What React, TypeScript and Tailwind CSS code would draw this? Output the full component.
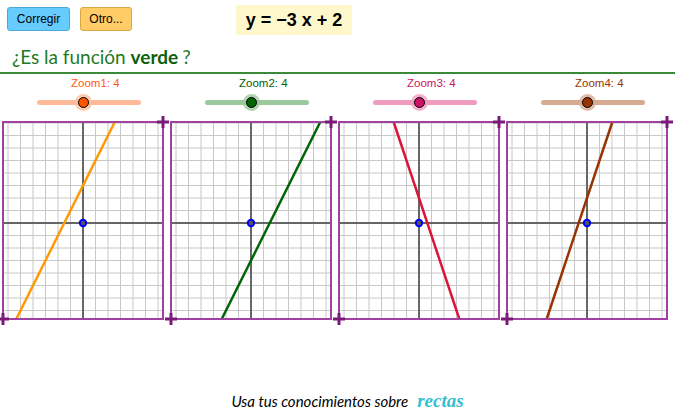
import React from 'react';

const S = 12.5;
const W = 160;
const H = 197;
const OX = 80;
const OY = 101;

type Panel = {
  name: string;
  label: string;
  track: string;
  knob: string;
  line: string;
  m: number;
  b: number;
};

const panels: Panel[] = [
  { name: 'Zoom1: 4', label: '#ff5a14', track: '#ffbb99', knob: '#ff5500', line: '#ff9900', m: 2, b: 3 },
  { name: 'Zoom2: 4', label: '#006400', track: '#9dc89d', knob: '#006400', line: '#006400', m: 2, b: -3 },
  { name: 'Zoom3: 4', label: '#cc1166', track: '#ef9cc0', knob: '#cc1166', line: '#dc143c', m: -3, b: 2 },
  { name: 'Zoom4: 4', label: '#993300', track: '#d6ab91', knob: '#993300', line: '#993300', m: 3, b: 2 },
];

function Plus({ x, y }: { x: number; y: number }) {
  return (
    <g stroke="#7a1a7a" strokeWidth={3}>
      <line x1={x - 6} y1={y} x2={x + 6} y2={y} />
      <line x1={x} y1={y - 6} x2={x} y2={y + 6} />
    </g>
  );
}

function Graph({ p }: { p: Panel }) {
  const vx: number[] = [];
  for (let k = -6; k <= 6; k++) if (k !== 0) vx.push(OX + k * S);
  const hy: number[] = [];
  for (let k = -7; k <= 8; k++) if (k !== 0) hy.push(OY - k * S);

  const yt = OY / S;
  const yb = -(H - OY) / S;
  const x1 = OX + ((yt - p.b) / p.m) * S;
  const x2 = OX + ((yb - p.b) / p.m) * S;

  return (
    <svg width={W} height={H} className="overflow-visible block">
      <rect x={0} y={0} width={W} height={H} fill="#ffffff" />
      <g stroke="#c8c8c8" strokeWidth={1}>
        {vx.map((x) => (
          <line key={'v' + x} x1={x} y1={0} x2={x} y2={H} />
        ))}
        {hy.map((y) => (
          <line key={'h' + y} x1={0} y1={y} x2={W} y2={y} />
        ))}
      </g>
      <g stroke="#666666" strokeWidth={2}>
        <line x1={OX} y1={0} x2={OX} y2={H} />
        <line x1={0} y1={OY} x2={W} y2={OY} />
      </g>
      <line x1={x1} y1={0} x2={x2} y2={H} stroke={p.line} strokeWidth={2.5} />
      <circle cx={OX} cy={OY} r={3.2} fill="#555555" stroke="#0000ff" strokeWidth={2} />
      <rect x={0} y={0} width={W} height={H} fill="none" stroke="#a040a0" strokeWidth={2} />
      <Plus x={W} y={0} />
      <Plus x={0} y={H} />
    </svg>
  );
}

function Slider({ p }: { p: Panel }) {
  return (
    <div className="relative ml-[34px] mt-[4px] h-[16px] w-[104px]">
      <div
        className="absolute left-0 right-0 top-[6px] h-[5px] rounded-full"
        style={{ backgroundColor: p.track }}
      />
      <div
        className="absolute left-[38px] top-0 h-[17px] w-[17px] rounded-full opacity-80"
        style={{ backgroundColor: p.track }}
      />
      <div
        className="absolute left-[41px] top-[3px] h-[11px] w-[11px] rounded-full border border-black"
        style={{ backgroundColor: p.knob }}
      />
    </div>
  );
}

export default function App() {
  return (
    <div className="h-[417px] w-[675px] bg-white flex flex-col overflow-hidden" style={{ fontFamily: '"Liberation Sans", Arial, sans-serif' }}>
      <div className="flex items-start h-[38px] shrink-0">
        <button className="ml-[7px] mt-[7px] w-[63px] h-[24px] rounded-[3px] bg-[#66ccff] border border-[#4fa8d8] text-[12px] text-black">
          Corregir
        </button>
        <button className="ml-[10px] mt-[7px] w-[52px] h-[24px] rounded-[3px] bg-[#ffcc66] border border-[#d9a845] text-[12px] text-black">
          Otro...
        </button>
        <div className="ml-[104px] mt-[5px] w-[116px] h-[30px] bg-[#fff8cc] flex items-center justify-center text-[18px] font-bold text-black">
          y = −3 x + 2
        </div>
      </div>

      <div
        className="h-[36px] shrink-0 flex items-end pl-[12px] pb-[3px] text-[19px] leading-[24px] text-[#1f7a1f] border-b-2 border-[#3a8a3a]"
        style={{ fontFamily: 'Lato, "Open Sans", sans-serif' }}
      >
        <span className="whitespace-pre">¿Es la función </span>
        <span className="font-bold text-[#0b610b]">verde</span>
        <span className="ml-[4px]">?</span>
      </div>

      <div className="flex pl-[3px] gap-[8px] pt-[2px]">
        {panels.map((p) => (
          <div key={p.name} className="flex flex-col w-[160px]">
            <div className="pl-[68px] h-[14px] text-[11.5px] leading-[14px] whitespace-nowrap" style={{ color: p.label }}>
              {p.name}
            </div>
            <Slider p={p} />
            <div className="mt-[12px]">
              <Graph p={p} />
            </div>
          </div>
        ))}
      </div>

      <div className="mt-auto pb-[6px] flex justify-center items-baseline pl-[20px] text-[15px] leading-[20px]">
        <span className="italic font-normal text-black" style={{ fontFamily: 'Lato, "Open Sans", sans-serif' }}>
          Usa tus conocimientos sobre
        </span>
        <span
          className="italic font-bold text-[#33bfd0] ml-[9px] text-[19px]"
          style={{ fontFamily: '"Liberation Serif", "DejaVu Serif", serif' }}
        >
          rectas
        </span>
      </div>
    </div>
  );
}
